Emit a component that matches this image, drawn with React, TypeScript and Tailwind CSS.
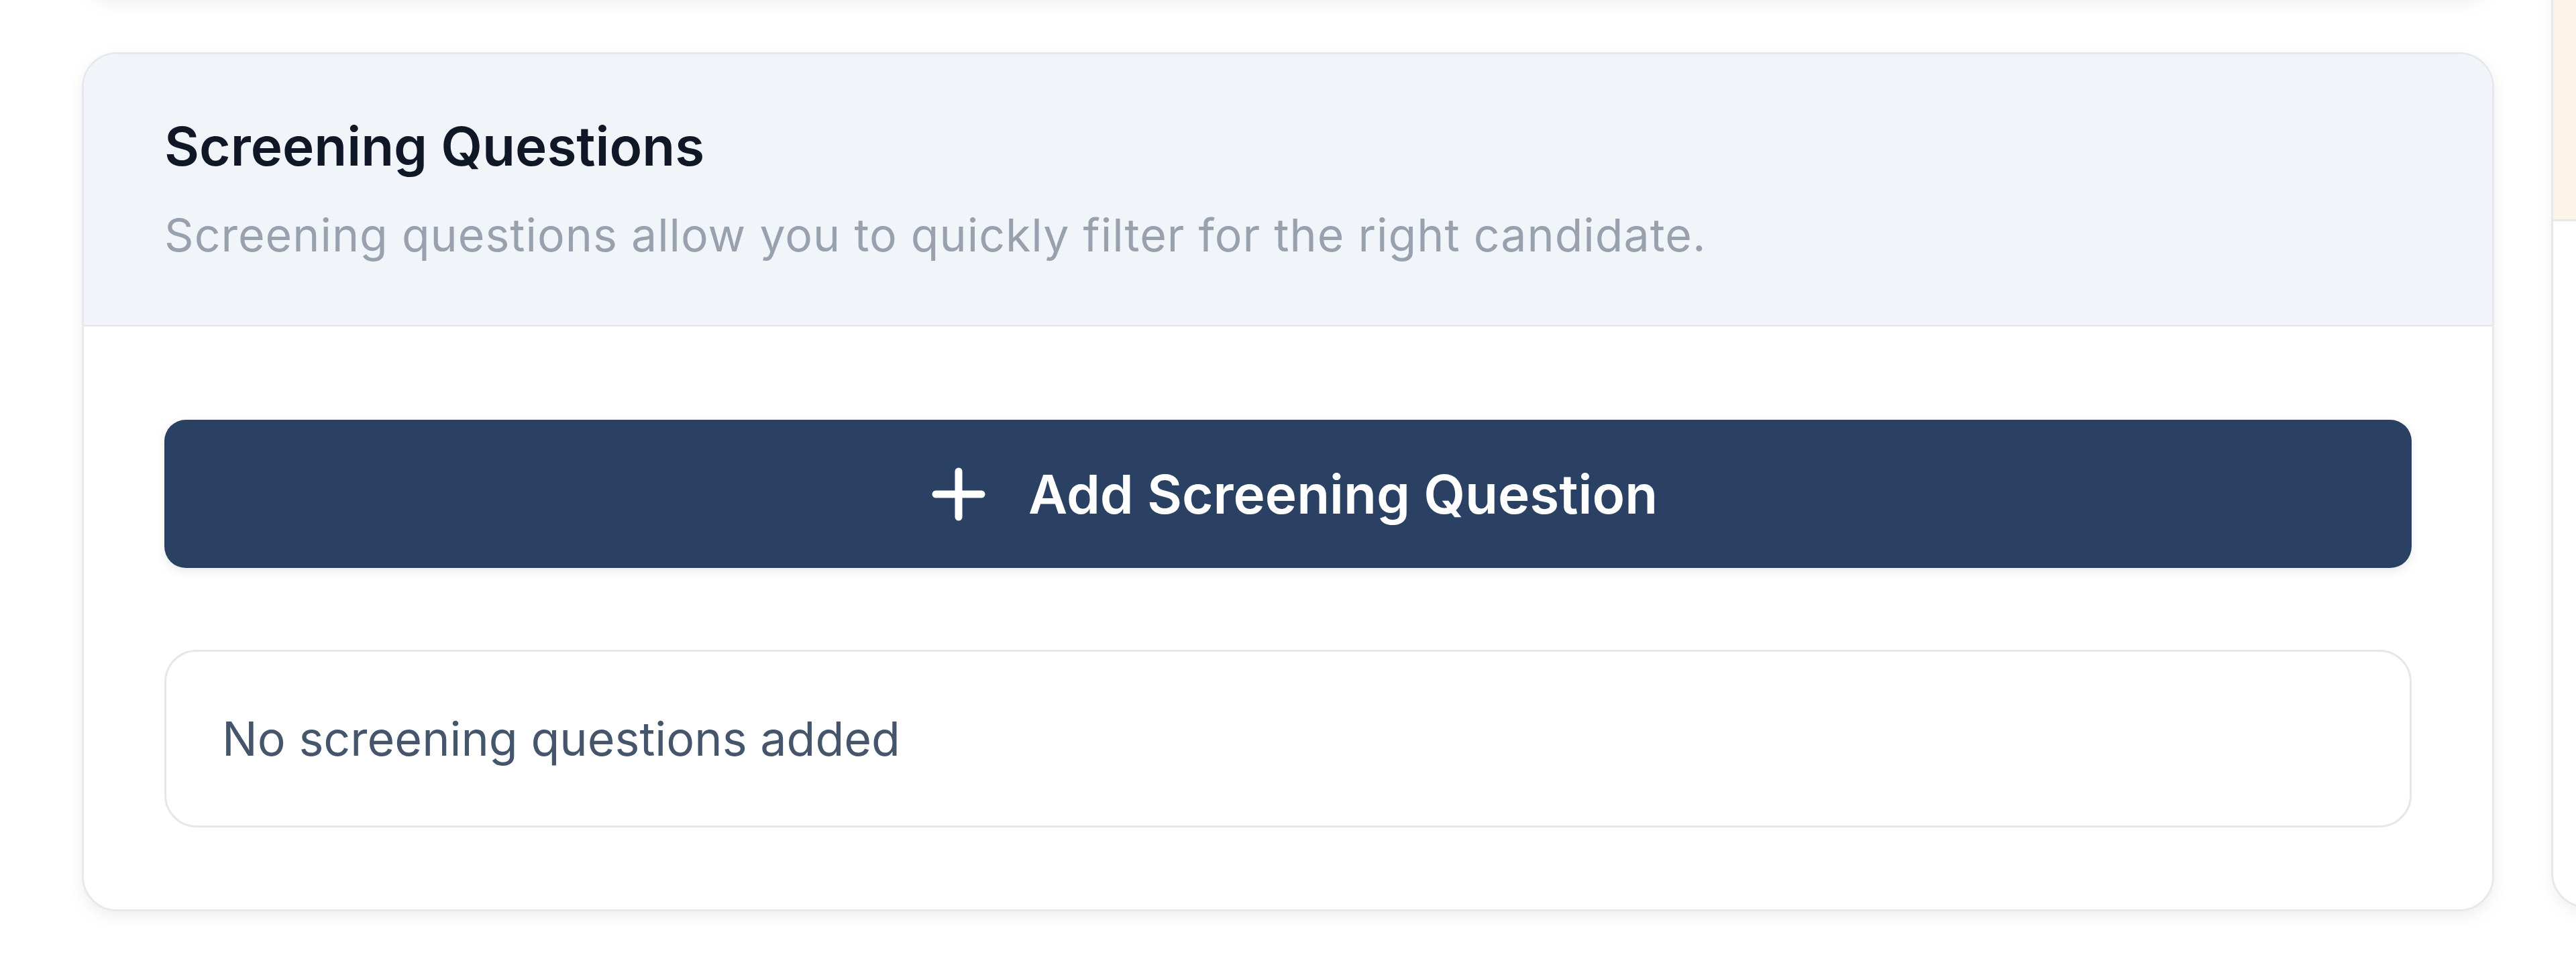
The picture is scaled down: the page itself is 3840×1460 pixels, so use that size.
function PlusIcon() {
    return (
        <svg width="80" height="80" viewBox="0 0 80 80" fill="none" stroke="currentColor" strokeWidth="11" strokeLinecap="round">
            <path d="M40 6v68" />
            <path d="M6 40h68" />
        </svg>
    );
}

export default function App() {
    return (
        <div
            className="min-h-[1460px] h-[1460px] bg-white flex gap-[85px] pl-[122px] overflow-hidden"
            style={{ fontFamily: 'Inter, "Noto Sans", sans-serif' }}
        >
            {/* Left column */}
            <div className="w-[3596px] shrink-0 flex flex-col gap-[78px] -mt-[300px]">
                {/* Previous card, only its bottom shadow shows */}
                <div className="h-[300px] shrink-0 rounded-[52px] border-[3px] border-[#e6e8ee] bg-white shadow-[0_8px_24px_rgba(0,0,0,0.06)]" />

                {/* Screening Questions card */}
                <div className="rounded-[52px] border-[3px] border-[#e6e8ee] bg-white overflow-hidden shadow-[0_8px_24px_rgba(0,0,0,0.07)]">
                    <div className="bg-[#f1f4f9] border-b-[3px] border-[#e6e8ee] px-[120px] pt-[89px] pb-[86px]">
                        <h2 className="text-[80px] leading-[96px] font-semibold text-[#101828]">Screening Questions</h2>
                        <p className="mt-[36px] text-[68px] leading-[96px] tracking-[1px] text-[#99a1af]">
                            Screening questions allow you to quickly filter for the right candidate.
                        </p>
                    </div>

                    <div className="px-[120px] pt-[139px] pb-[122px] flex flex-col gap-[122px]">
                        <button className="h-[221px] w-full rounded-[32px] bg-[#2a4163] text-white flex items-center justify-center gap-[64px] pl-[20px] shadow-[0_6px_16px_rgba(0,0,0,0.08)]">
                            <PlusIcon />
                            <span className="text-[80px] font-semibold leading-none">Add Screening Question</span>
                        </button>

                        <div className="h-[265px] rounded-[48px] border-[3px] border-[#e5e7eb] flex items-center px-[83px]">
                            <span className="text-[70px] text-[#45556c]">No screening questions added</span>
                        </div>
                    </div>
                </div>
            </div>

            {/* Right column, partially visible card */}
            <div className="w-[600px] shrink-0 -mt-[200px] h-[1554px] rounded-[52px] border-[3px] border-[#e6e8ee] bg-white overflow-hidden shadow-[0_8px_24px_rgba(0,0,0,0.06)]">
                <div className="h-[527px] bg-[#fcf4e9] border-b-[3px] border-[#e6e8ee]" />
            </div>
        </div>
    );
}
